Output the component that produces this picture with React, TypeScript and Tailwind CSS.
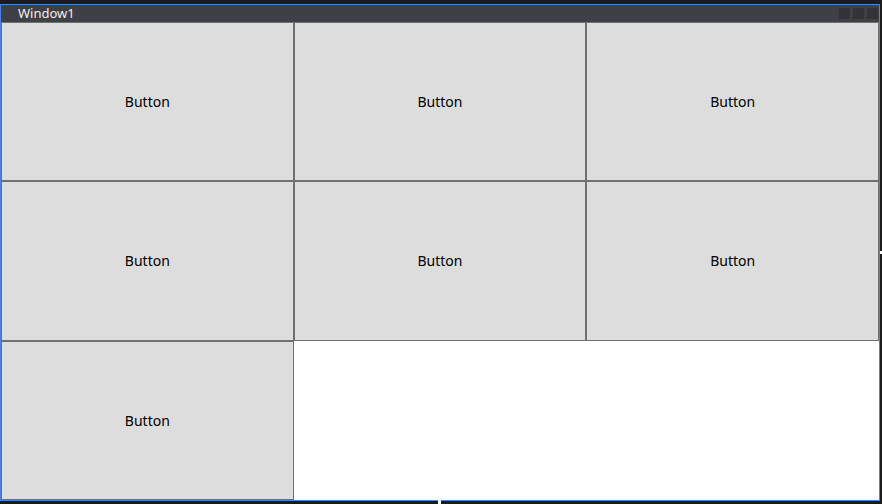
const buttons = Array.from({ length: 7 }, (_, i) => i);

export default function App() {
  return (
    <div className="relative w-[882px] h-[504px] bg-[#1b1b1c] pt-[4px] font-['Noto_Sans',sans-serif]">
      <div className="w-[880px] h-[497px] border border-[#4f80dc] flex flex-col bg-white">
        <div className="h-[17px] bg-[#3f3f46] flex items-center pl-[17px] pr-[1px]">
          <span className="text-[13px] leading-none text-[#f0f0f0]">Window1</span>
          <div className="ml-auto flex gap-[3px]">
            <div className="w-[11px] h-[11px] bg-[#333337]" />
            <div className="w-[11px] h-[11px] bg-[#333337]" />
            <div className="w-[11px] h-[11px] bg-[#333337]" />
          </div>
        </div>
        <div className="flex-1 grid grid-cols-3 grid-rows-3">
          {buttons.map((i) => (
            <button
              key={i}
              className="bg-[#dddddd] border border-[#707070] text-[14px] text-black flex items-center justify-center"
            >
              Button
            </button>
          ))}
        </div>
      </div>
      <div className="absolute left-[438px] top-[500px] w-[3px] h-[4px] bg-white" />
      <div className="absolute left-[880px] top-[251px] w-[2px] h-[3px] bg-white" />
    </div>
  );
}
